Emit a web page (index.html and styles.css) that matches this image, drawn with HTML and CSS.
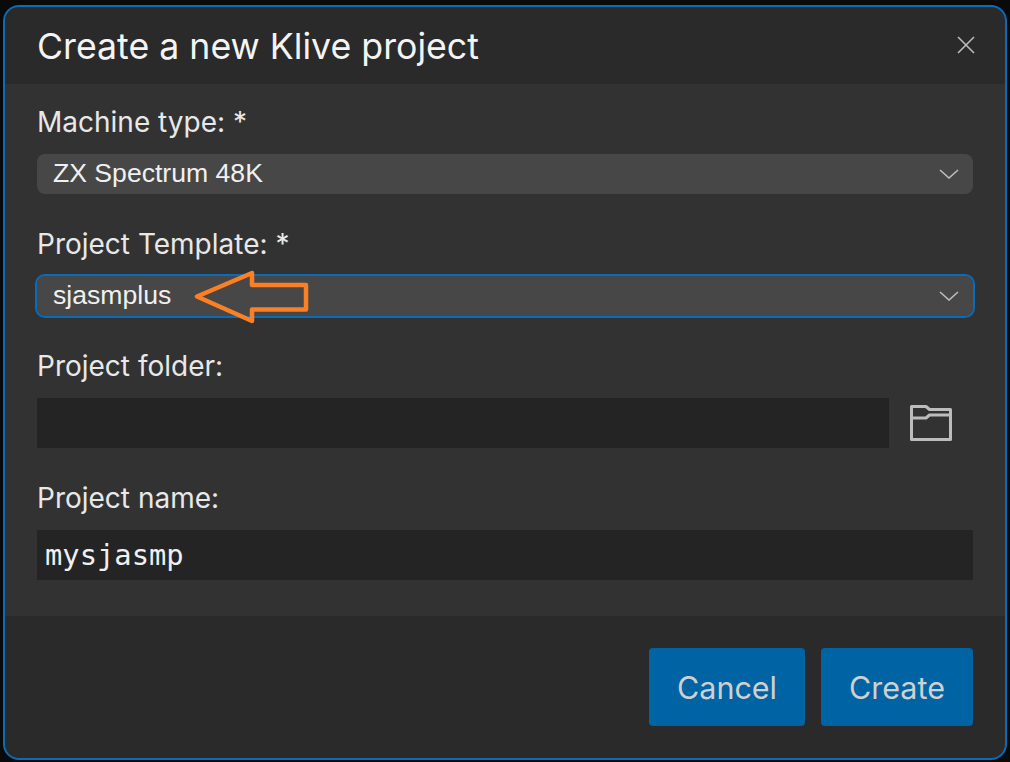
FILE: index.html
```html
<!DOCTYPE html>
<html lang="en">
<head>
<meta charset="utf-8">
<title>Create a new Klive project</title>
<link rel="stylesheet" href="styles.css">
</head>
<body>
<div class="dialog">
  <header class="head">
    <h1 class="title">Create a new Klive project</h1>
    <svg class="close" viewBox="0 0 18 18" width="18" height="18"><path d="M1 1L17 17M17 1L1 17" fill="none" stroke="#bcbcbc" stroke-width="1.6"/></svg>
  </header>
  <main class="body">
    <div class="label first">Machine type: *</div>
    <div class="select">
      <span class="value">ZX Spectrum 48K</span>
      <svg class="chev" viewBox="0 0 20 10" width="20" height="10"><path d="M1 1L10 9L19 1" fill="none" stroke="#bcbcbc" stroke-width="1.6"/></svg>
    </div>
    <div class="label second">Project Template: *</div>
    <div class="select focus">
      <span class="value">sjasmplus</span>
      <svg class="chev" viewBox="0 0 20 10" width="20" height="10"><path d="M1 1L10 9L19 1" fill="none" stroke="#bcbcbc" stroke-width="1.6"/></svg>
    </div>
    <div class="label third">Project folder:</div>
    <div class="folder-row">
      <div class="input grow"></div>
      <svg class="folder" viewBox="0 0 42 36" width="42" height="36"><path d="M1.500 1.500H16L19.500 4.500H40.500V34.500H1.500ZM1.500 13H16L19.500 10H40.500" fill="none" stroke="#bcbcbc" stroke-width="3" stroke-linejoin="round"/></svg>
    </div>
    <div class="label fourth">Project name:</div>
    <div class="input">mysjasmp</div>
    <svg class="arrow" viewBox="0 0 116 54" width="116" height="54"><path d="M3 26.500L58 3V15H112V39.500H58V51Z" fill="none" stroke="#fb7f24" stroke-width="4.500" stroke-linejoin="round"/></svg>
  </main>
  <footer class="foot">
    <button class="btn cancel">Cancel</button>
    <button class="btn create">Create</button>
  </footer>
</div>
</body>
</html>
```
FILE: styles.css
```css
* { box-sizing: border-box; }
html, body { margin: 0; height: 100%; }
body {
  background: #0a0a0a;
  padding: 5px 3px 2px;
  font-family: Inter, "Liberation Sans", sans-serif;
  overflow: hidden;
}
.dialog {
  width: 1004px;
  height: 755px;
  border: 2px solid #0a6cb8;
  border-radius: 16px;
  background: #2a2a2a;
  display: flex;
  flex-direction: column;
  overflow: hidden;
}
.head {
  height: 77px;
  padding: 1px 30px 0 32px;
  display: flex;
  align-items: center;
  justify-content: space-between;
  flex: none;
}
.title {
  margin: 0;
  font-size: 35.700px;
  font-weight: 400;
  color: #f4f4f4;
}
.close { margin-top: -2px; }
.body {
  position: relative;
  height: 532px;
  flex: none;
  background: #323232;
  padding: 0 32px;
}
.label {
  font-size: 28px;
  line-height: 30px;
  color: #e8e8e8;
}
.first { margin-top: 23px; margin-bottom: 17px; }
.second { margin-top: 35px; margin-bottom: 17px; }
.third { margin-top: 35px; margin-bottom: 17px; }
.fourth { margin-top: 35px; margin-bottom: 17px; }
.select {
  height: 40px;
  border-radius: 8px;
  background: #474747;
  display: flex;
  align-items: center;
  justify-content: space-between;
  padding: 0 14px 0 16px;
  font-family: "Liberation Sans", sans-serif;
  font-size: 26.600px;
  color: #f0f0f0;
}
.value { margin-top: -2px; }
.focus { outline: 2px solid #0a6cb8; }
.folder-row {
  display: flex;
  align-items: center;
  gap: 21px;
  padding-right: 21px;
}
.input {
  height: 50px;
  background: #242424;
  padding: 0 8px;
  font-family: "DejaVu Sans Mono", monospace;
  font-size: 28.800px;
  line-height: 50px;
  color: #f0f0f0;
}
.grow { flex: 1; }
.folder { flex: none; margin-top: -1px; }
.arrow { position: absolute; left: 189px; top: 186px; }
.foot {
  flex: 1;
  display: flex;
  justify-content: flex-end;
  align-items: flex-start;
  gap: 16px;
  padding: 32px 32px 0;
}
.btn {
  height: 78px;
  border: 0;
  border-radius: 4px;
  background: #0063a3;
  color: #d0d0d0;
  font-family: Inter, sans-serif;
  font-size: 30.500px;
  padding: 0;
}
.cancel { width: 156px; }
.create { width: 152px; }
```
